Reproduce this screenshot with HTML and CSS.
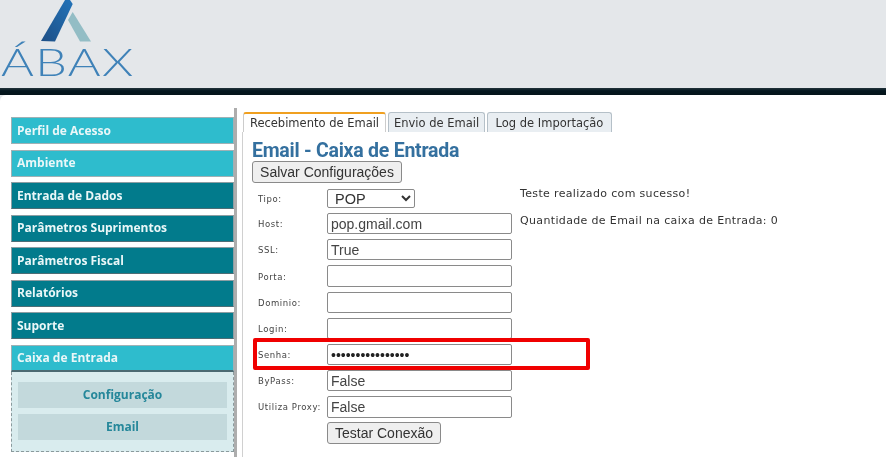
FILE: index.html
```html
<!DOCTYPE html>
<html lang="pt">
<head>
<meta charset="utf-8">
<title>Email - Caixa de Entrada</title>
<link rel="stylesheet" href="styles.css">
</head>
<body>
<div class="page">
  <header class="top">
    <div class="logo">
      <svg class="mark" width="100" height="42" viewBox="0 0 100 42" aria-hidden="true">
        <defs>
          <linearGradient id="dark" x1="0" y1="1" x2="1" y2="0">
            <stop offset="0" stop-color="#1d4f86"/>
            <stop offset="1" stop-color="#2373b8"/>
          </linearGradient>
        </defs>
        <polygon points="41,41 65,0 70,0 72.7,4 55,41.5" fill="url(#dark)"/>
        <polygon points="68,20 72.7,12 91,41.5 80,41.5" fill="#93bdc5"/>
      </svg>
      <div class="wordmark">ÁBAX</div>
    </div>
  </header>
  <div class="band"></div>
  <div class="body">
    <nav class="side">
      <a class="item light">Perfil de Acesso</a>
      <a class="item light">Ambiente</a>
      <a class="item">Entrada de Dados</a>
      <a class="item">Parâmetros Suprimentos</a>
      <a class="item">Parâmetros Fiscal</a>
      <a class="item">Relatórios</a>
      <a class="item">Suporte</a>
      <div class="group">
        <a class="item light open">Caixa de Entrada</a>
        <div class="sub">
          <a class="subitem">Configuração</a>
          <a class="subitem">Email</a>
        </div>
      </div>
    </nav>
    <div class="rule"></div>
    <main class="main">
      <div class="tabs">
        <span class="tab active">Recebimento de Email</span>
        <span class="tab t2">Envio de Email</span>
        <span class="tab t3">Log de Importação</span>
      </div>
      <section class="panel">
        <h1>Email - Caixa de Entrada</h1>
        <button class="btn save" type="button">Salvar Configurações</button>
        <div class="columns">
          <form class="form">
            <label>Tipo:</label>
            <select class="sel"><option>POP</option></select>
            <label>Host:</label>
            <input class="inp" value="pop.gmail.com">
            <label>SSL:</label>
            <input class="inp" value="True">
            <label>Porta:</label>
            <input class="inp">
            <label>Dominio:</label>
            <input class="inp">
            <label>Login:</label>
            <input class="inp">
            <label>Senha:</label>
            <input class="inp pw" type="password" value="1234567890123456">
            <label>ByPass:</label>
            <input class="inp" value="False">
            <label>Utiliza Proxy:</label>
            <input class="inp" value="False">
            <span></span>
            <button class="btn test" type="button">Testar Conexão</button>
          </form>
          <div class="msgs">
            <p>Teste realizado com sucesso!</p>
            <p>Quantidade de Email na caixa de Entrada: 0</p>
          </div>
        </div>
        <div class="mark-red"></div>
      </section>
    </main>
  </div>
</div>
</body>
</html>
```
FILE: styles.css
```css
* { box-sizing: border-box; }
html, body { margin: 0; padding: 0; background: #fff; }
.page {
  width: 886px; height: 457px; overflow: hidden; position: relative;
  font-family: "DejaVu Sans", sans-serif; filter: blur(0.35px);
  background: #e4e7ea;
}
.top { height: 88px; background: #e4e7ea; }
.logo { position: relative; height: 88px; }
.mark { display: block; }
.wordmark {
  position: absolute; left: 1px; top: 35px;
  font-family: Lato, sans-serif; font-weight: 300; font-size: 38px; line-height: 52px;
  letter-spacing: 1px; color: #3f82b8;
  transform: scaleX(1.32); transform-origin: left center;
}
.band { height: 7px; background: linear-gradient(#24343c, #04171f 40%, #05141a); }
.body { display: flex; height: 362px; background: #fff; border-top-left-radius: 6px; margin-top: 0; }
.side { width: 234px; padding: 22px 0 0 11px; display: flex; flex-direction: column; gap: 5.5px; flex: none; }
.item {
  display: flex; align-items: center; height: 27px; padding: 0 0 1px 5px;
  background: #027b8c; border: 1px solid #8d9ea3; border-bottom-color: #4d6e76;
  color: #eaf7f8; font: bold 12px "Open Sans", sans-serif;
}
.item.light { background: #2ebccd; border-color: #9fb1b5; }
.item.open { border-bottom: 2px solid #4b6a72; }
.group { display: flex; flex-direction: column; }
.sub {
  height: 80px; background: #d9ecee; border: 1px dashed #8b9a9d; border-top: 0;
  padding: 10px 6px 0; display: flex; flex-direction: column; gap: 6px;
}
.subitem {
  display: flex; align-items: center; justify-content: center; height: 26px;
  background: #c3d9dc; color: #25879a; font: bold 12px "Open Sans", sans-serif;
}
.rule { width: 3px; margin-top: 13px; background: #adadad; flex: none; }
.main { flex: 1; margin-left: 5px; padding-top: 17px; display: flex; flex-direction: column; min-width: 0; }
.tabs { display: flex; gap: 2px; height: 20px; padding-left: 1px; flex: none; }
.tab {
  display: flex; align-items: center; justify-content: center; height: 20px;
  font: 11.5px "DejaVu Sans", sans-serif; color: #333;
  background: #e9eef2; border: 1px solid #b5c0c8; border-bottom: 0; border-radius: 3px 3px 0 0;
}
.tab.active { width: 143px; background: #fff; border-top: 2px solid #f0a020; border-color: #f0a020 #ccc transparent #ccc; }
.t2 { width: 97px; }
.t3 { width: 125px; }
.panel { flex: 1; border-left: 1px solid #d0d0d0; padding: 9px 0 0 9px; position: relative; }
h1 { margin: 0; font: bold 19.5px/20px Roboto, sans-serif; letter-spacing: -0.25px; color: #34709f; }
.btn {
  display: block; padding: 0; background: #efefef; border: 1px solid #8a8a8a; border-radius: 3px;
  font: 14px "Liberation Sans", sans-serif; color: #333;
}
.save { width: 150px; height: 22px; }
.columns { display: flex; margin-top: 6px; }
.form {
  display: grid; grid-template-columns: 69px 185px; grid-template-rows: 19px; grid-auto-rows: 21.1px; row-gap: 5.1px;
  margin-left: 6px; align-items: center;
}
.form label { font-size: 8.5px; letter-spacing: 0.6px; color: #444; margin-top: 1px; }
.inp, .sel {
  width: 100%; height: 21.1px; padding: 1px 3px 0; margin: 0; background: #fff;
  border: 1px solid #8a8a8a; border-radius: 2px;
  font: 14px "Liberation Sans", sans-serif; color: #444; outline: 0;
}
.pw { font-size: 14px; color: #222; }
.sel { width: 88px; height: 19px; padding: 0 3px; color: #333; font-size: 14.5px; }
.test { width: 114px; height: 22px; }
.msgs { margin-left: 8px; font-size: 11px; letter-spacing: 0.35px; color: #333; margin-top: -2px; }
.msgs p { margin: 0 0 14px; line-height: 13px; }
.mark-red {
  position: absolute; left: 10px; top: 206px; width: 337px; height: 32px;
  border: 4px solid #f00000; border-radius: 2px;
}
```
